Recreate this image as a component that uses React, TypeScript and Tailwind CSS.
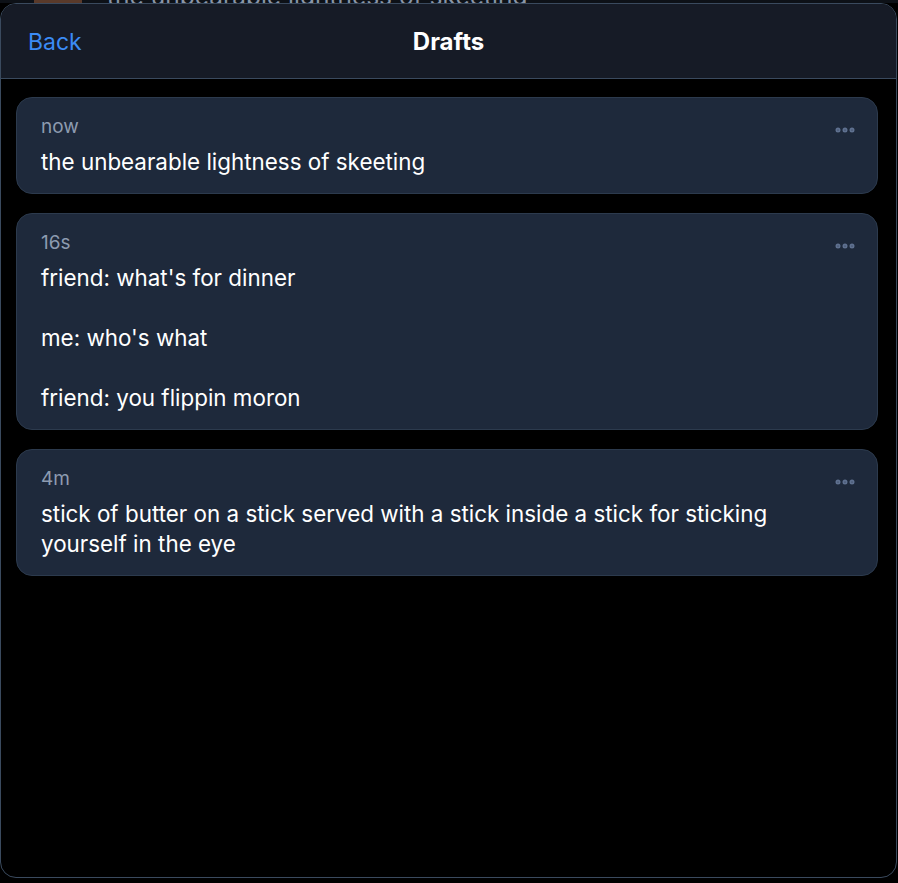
import { MoreHorizontal } from 'lucide-react';

type Draft = {
  id: string;
  age: string;
  text: string;
};

const drafts: Draft[] = [
  { id: 'd1', age: 'now', text: 'the unbearable lightness of skeeting' },
  { id: 'd2', age: '16s', text: "friend: what's for dinner\n\nme: who's what\n\nfriend: you flippin moron" },
  { id: 'd3', age: '4m', text: 'stick of butter on a stick served with a stick inside a stick for sticking yourself in the eye' },
];

function DraftCard({ draft }: { draft: Draft }) {
  return (
    <div className="relative rounded-2xl border border-[#2c3a4d] bg-[#1e293b] pl-6 pr-14 pt-[17px] pb-4">
      <div className="text-[19px] leading-6 text-[#8d9bb0]">{draft.age}</div>
      <div className="mt-2 whitespace-pre-wrap text-[22.4px] leading-[30px] text-white">{draft.text}</div>
      <button className="absolute right-[20px] top-[20px] text-[#5f7190]">
        <MoreHorizontal size={24} strokeWidth={3} />
      </button>
    </div>
  );
}

export default function App() {
  return (
    <div className="flex h-[883px] w-[898px] flex-col overflow-hidden bg-black" style={{ fontFamily: 'Inter, "Noto Sans", sans-serif' }}>
      {/* page underneath, mostly hidden by the sheet */}
      <div className="relative h-[3px] shrink-0 overflow-hidden bg-[#0d1117]">
        <div className="absolute left-[34px] top-[-30px] h-[40px] w-[48px] rounded-md bg-[#5a3a2a]" />
        <div className="absolute left-[107px] top-[-22px] text-[24.5px] text-[#8a96a8]">the unbearable lightness of skeeting</div>
      </div>

      <div className="mr-px mb-[5px] flex flex-1 flex-col overflow-hidden rounded-2xl border border-[#3a4a5e] bg-black">
        <header className="relative flex h-[75px] shrink-0 items-center justify-center border-b border-[#3a4a5e] bg-[#161b26]">
          <button className="absolute left-[27px] top-[21px] text-[23px] text-[#3b8bf5]">Back</button>
          <h1 className="mt-[2px] text-[24px] font-bold text-white">Drafts</h1>
        </header>

        <div className="flex flex-col gap-[19px] pl-[15px] pr-[18px] pt-[18px]">
          {drafts.map(d => (
            <DraftCard key={d.id} draft={d} />
          ))}
        </div>
      </div>
    </div>
  );
}
